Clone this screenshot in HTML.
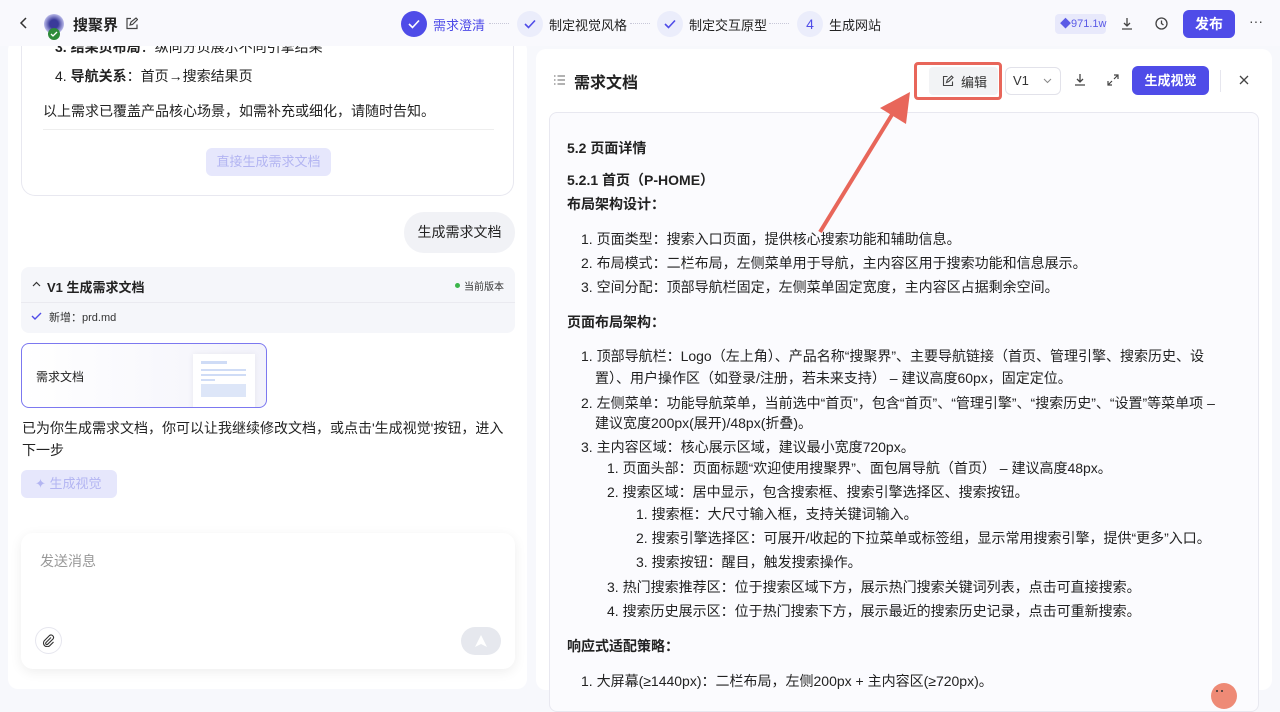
<!DOCTYPE html>
<html><head><meta charset="utf-8">
<style>
*{margin:0;padding:0;box-sizing:border-box}
body{width:1280px;height:697px;overflow:hidden;background:#f7f8fc;font-family:"Liberation Sans","Noto Sans CJK SC",sans-serif;color:#222;position:relative}
.a{position:absolute;white-space:nowrap}
.hdr{position:absolute;left:0;top:0;width:1280px;height:46px;background:#f9f9fd;z-index:5}
.step{position:absolute;top:11px;width:26px;height:26px;border-radius:50%;background:#ebedfb;color:#4f4ce8;font-size:14px;text-align:center;line-height:26px}
.step svg{position:absolute;left:7px;top:8px}
.dots{position:absolute;top:23px;width:20px;border-top:1px dotted #c8c8d8}
.doc{font-size:14px;color:#222}
.doc .a{line-height:20px}
b{font-weight:bold}
</style></head><body>

<div class="hdr">
  <svg class="a" style="left:18px;top:16px" width="12" height="14"><path d="M8 2L3 7l5 5" stroke="#333" stroke-width="1.5" fill="none"/></svg>
  <div class="a" style="left:44px;top:14px;width:20px;height:20px;border-radius:50%;background:radial-gradient(circle,#3a3a9a 30%,#b8b8e8 70%,#eee 100%)"></div>
  <div class="a" style="left:48px;top:28px;width:12px;height:12px;border-radius:50%;background:#2e8b3a"></div>
  <svg class="a" style="left:50px;top:31px" width="8" height="6"><path d="M1 3l2 2 4-4" stroke="#fff" stroke-width="1.3" fill="none"/></svg>
  <div class="a" style="left:73px;top:14px;font-size:15px;font-weight:bold;color:#222">搜聚界</div>
  <svg class="a" style="left:125px;top:17px" width="13" height="13"><path d="M6 1.5H2v10h10V7.5M5 8l1-3 5-4 1.5 1.5-5 5z" stroke="#444" stroke-width="1.2" fill="none"/></svg>

  <div class="step" style="left:401px;background:#4f4ce8"><svg width="12" height="10"><path d="M1 5l3.5 3.5L11 1.5" stroke="#fff" stroke-width="1.6" fill="none"/></svg></div>
  <div class="a" style="left:433px;top:15px;font-size:13px;color:#4f4ce8">需求澄清</div>
  <div class="dots" style="left:489px"></div>
  <div class="step" style="left:517px"><svg width="12" height="10"><path d="M1 5l3.5 3.5L11 1.5" stroke="#4f4ce8" stroke-width="1.6" fill="none"/></svg></div>
  <div class="a" style="left:549px;top:15px;font-size:13px">制定视觉风格</div>
  <div class="dots" style="left:630px"></div>
  <div class="step" style="left:657px"><svg width="12" height="10"><path d="M1 5l3.5 3.5L11 1.5" stroke="#4f4ce8" stroke-width="1.6" fill="none"/></svg></div>
  <div class="a" style="left:689px;top:15px;font-size:13px">制定交互原型</div>
  <div class="dots" style="left:769px"></div>
  <div class="step" style="left:797px">4</div>
  <div class="a" style="left:829px;top:15px;font-size:13px">生成网站</div>

  <div class="a" style="left:1055px;top:14px;width:51px;height:20px;border-radius:4px;background:#e8e9fb;color:#5a5ae6;font-size:11px;line-height:20px;padding-left:5px">◆971.1w</div>
  <svg class="a" style="left:1120px;top:17px" width="14" height="14"><path d="M7 1v8M4 6l3 3 3-3M2 12h10" stroke="#444" stroke-width="1.3" fill="none"/></svg>
  <svg class="a" style="left:1154px;top:16px" width="15" height="15"><circle cx="7.5" cy="7.5" r="5.5" stroke="#444" stroke-width="1.3" fill="none"/><path d="M7.5 4.5v3l2 1.5" stroke="#444" stroke-width="1.3" fill="none"/></svg>
  <div class="a" style="left:1183px;top:10px;width:52px;height:28px;border-radius:6px;background:#4f4ce8;color:#fff;font-size:14px;font-weight:bold;text-align:center;line-height:28px">发布</div>
  <div class="a" style="left:1249px;top:13px;font-size:14px;color:#444">···</div>
</div>

<!-- left panel -->
<div class="a" style="left:8px;top:40px;width:519px;height:649px;background:#fff;border-radius:10px"></div>
<div class="a" style="left:21px;top:36px;width:493px;height:160px;border:1px solid #e8e8f0;border-top:none;border-radius:0 0 14px 14px;background:#fff"></div>
<div class="a" style="left:55px;top:37px;font-size:14px"><b>3. 结果页布局</b>：纵向分页展示不同引擎结果</div>
<div class="a" style="left:55px;top:66px;font-size:14px">4. <b>导航关系</b>：首页→搜索结果页</div>
<div class="a" style="left:43px;top:101px;font-size:14px">以上需求已覆盖产品核心场景，如需补充或细化，请随时告知。</div>
<div class="a" style="left:43px;top:129px;width:451px;border-top:1px solid #eee"></div>
<div class="a" style="left:206px;top:148px;width:125px;height:28px;border-radius:6px;background:#e6e7fc;color:#b3b5f2;font-size:13px;text-align:center;line-height:28px">直接生成需求文档</div>

<div class="a" style="left:404px;top:212px;width:111px;height:41px;border-radius:20px;background:#f1f2f6;font-size:14px;text-align:center;line-height:41px">生成需求文档</div>

<div class="a" style="left:21px;top:267px;width:494px;height:66px;border-radius:8px;background:#f5f6fa"></div>
<div class="a" style="left:21px;top:302px;width:494px;border-top:1px solid #eaeaf0"></div>
<svg class="a" style="left:32px;top:281px" width="9" height="6"><path d="M1 5l3.5-3.5L8 5" stroke="#333" stroke-width="1.2" fill="none"/></svg>
<div class="a" style="left:47px;top:277px;font-size:13px;font-weight:bold">V1 生成需求文档</div>
<div class="a" style="left:455px;top:283px;width:5px;height:5px;border-radius:50%;background:#3bb54a"></div>
<div class="a" style="left:464px;top:278px;font-size:10px;color:#333">当前版本</div>
<svg class="a" style="left:31px;top:312px" width="11" height="8"><path d="M1 4l3 3 6-6" stroke="#4f4ce8" stroke-width="1.4" fill="none"/></svg>
<div class="a" style="left:49px;top:309px;font-size:11px;color:#333">新增：prd.md</div>

<div class="a" style="left:21px;top:343px;width:246px;height:65px;border:1px solid #7c78f0;border-radius:8px;background:linear-gradient(90deg,#fff,#f3f3fb);overflow:hidden">
  <div class="a" style="left:14px;top:24px;font-size:12px">需求文档</div>
  <div class="a" style="left:171px;top:10px;width:62px;height:60px;background:#fff;box-shadow:0 0 6px rgba(0,0,0,.06)">
    <div class="a" style="left:8px;top:7px;width:26px;height:3px;background:#cfdcf6"></div>
    <div class="a" style="left:8px;top:15px;width:45px;height:2px;background:#cfdcf6"></div>
    <div class="a" style="left:8px;top:20px;width:45px;height:2px;background:#cfdcf6"></div>
    <div class="a" style="left:8px;top:25px;width:14px;height:2px;background:#cfdcf6"></div>
    <div class="a" style="left:8px;top:30px;width:45px;height:13px;background:#dde6f8"></div>
  </div>
</div>
<div class="a" style="left:22px;top:417px;font-size:14px;line-height:22px;white-space:normal;width:490px">已为你生成需求文档，你可以让我继续修改文档，或点击'生成视觉'按钮，进入下一步</div>
<div class="a" style="left:21px;top:470px;width:96px;height:28px;border-radius:6px;background:#e6e7fc;color:#b3b5f2;font-size:13px;line-height:28px;padding-left:14px">✦ 生成视觉</div>

<div class="a" style="left:21px;top:533px;width:494px;height:136px;border-radius:12px;background:#fff;box-shadow:0 3px 12px rgba(0,0,0,.07)"></div>
<div class="a" style="left:40px;top:551px;font-size:14px;color:#999">发送消息</div>
<div class="a" style="left:35px;top:627px;width:27px;height:27px;border-radius:50%;border:1px solid #e6e6ee"></div>
<svg class="a" style="left:42px;top:634px" width="13" height="13"><path d="M9 3.5L4 8.5a1.2 1.2 0 0 0 1.7 1.7L11 5a2.5 2.5 0 0 0-3.5-3.5L2.3 6.7a3.7 3.7 0 0 0 5.2 5.2L11.5 8" stroke="#333" stroke-width="1.1" fill="none"/></svg>
<div class="a" style="left:461px;top:627px;width:40px;height:28px;border-radius:14px;background:#e6e8ee"></div>
<svg class="a" style="left:474px;top:634px" width="14" height="14"><path d="M7 1L13 13 7 10 1 13z" fill="#fff"/></svg>

<!-- right panel -->
<div class="a" style="left:536px;top:49px;width:736px;height:641px;background:#fff;border-radius:10px"></div>
<svg class="a" style="left:554px;top:75px" width="11" height="10"><path d="M0 1h1.5M0 5h1.5M0 9h1.5M3.5 1H11M3.5 5H11M3.5 9H11" stroke="#666" stroke-width="1"/></svg>
<div class="a" style="left:574px;top:69px;font-size:16px;font-weight:bold;color:#222">需求文档</div>
<div class="a" style="left:914px;top:62px;width:88px;height:38px;border:3px solid #e8665a;border-radius:4px"></div>
<div class="a" style="left:929px;top:67px;width:69px;height:28px;background:#f2f3f5;border-radius:4px"></div>
<svg class="a" style="left:942px;top:75px" width="12" height="12"><path d="M5.5 1.5H1.5v9h9V6.5M4.5 7.5l.8-2.5 4.2-4 1.5 1.5-4.2 4z" stroke="#444" stroke-width="1.1" fill="none"/></svg>
<div class="a" style="left:961px;top:72px;font-size:13px;color:#333">编辑</div>
<div class="a" style="left:1005px;top:67px;width:56px;height:28px;border:1px solid #e2e2ea;border-radius:6px;font-size:13px;line-height:26px;padding-left:7px;color:#333">V1</div>
<svg class="a" style="left:1043px;top:78px" width="9" height="6"><path d="M1 1l3.5 3.5L8 1" stroke="#888" stroke-width="1" fill="none"/></svg>
<svg class="a" style="left:1073px;top:73px" width="14" height="14"><path d="M7 1v8M4 6l3 3 3-3M2 12h10" stroke="#444" stroke-width="1.3" fill="none"/></svg>
<svg class="a" style="left:1107px;top:74px" width="12" height="12"><path d="M7 1h4v4M11 1L7 5M5 11H1V7M1 11l4-4" stroke="#444" stroke-width="1.2" fill="none"/></svg>
<div class="a" style="left:1132px;top:66px;width:77px;height:29px;border-radius:6px;background:#4f4ce8;color:#fff;font-size:13px;font-weight:bold;text-align:center;line-height:29px">生成视觉</div>
<div class="a" style="left:1220px;top:70px;height:22px;border-left:1px solid #e6e6ee"></div>
<svg class="a" style="left:1238px;top:74px" width="12" height="12"><path d="M2 2l8 8M10 2l-8 8" stroke="#444" stroke-width="1.3"/></svg>

<div class="a" style="left:549px;top:112px;width:710px;height:600px;background:#fbfbfe;border:1px solid #e8e8f0;border-radius:8px"></div>

<div class="doc">
<div class="a" style="left:567px;top:138px"><b>5.2 页面详情</b></div>
<div class="a" style="left:567px;top:170px"><b>5.2.1 首页（P-HOME）</b></div>
<div class="a" style="left:567px;top:194px"><b>布局架构设计：</b></div>
<div class="a" style="left:581px;top:229px">1. 页面类型：搜索入口页面，提供核心搜索功能和辅助信息。</div>
<div class="a" style="left:581px;top:253px">2. 布局模式：二栏布局，左侧菜单用于导航，主内容区用于搜索功能和信息展示。</div>
<div class="a" style="left:581px;top:277px">3. 空间分配：顶部导航栏固定，左侧菜单固定宽度，主内容区占据剩余空间。</div>
<div class="a" style="left:567px;top:312px"><b>页面布局架构：</b></div>
<div class="a" style="left:581px;top:346px">1. 顶部导航栏：Logo（左上角）、产品名称“搜聚界”、主要导航链接（首页、管理引擎、搜索历史、设</div>
<div class="a" style="left:595px;top:368px">置）、用户操作区（如登录/注册，若未来支持） – 建议高度60px，固定定位。</div>
<div class="a" style="left:581px;top:393px">2. 左侧菜单：功能导航菜单，当前选中“首页”，包含“首页”、“管理引擎”、“搜索历史”、“设置”等菜单项 –</div>
<div class="a" style="left:595px;top:413px">建议宽度200px(展开)/48px(折叠)。</div>
<div class="a" style="left:581px;top:437px">3. 主内容区域：核心展示区域，建议最小宽度720px。</div>
<div class="a" style="left:607px;top:458px">1. 页面头部：页面标题“欢迎使用搜聚界”、面包屑导航（首页） – 建议高度48px。</div>
<div class="a" style="left:607px;top:482px">2. 搜索区域：居中显示，包含搜索框、搜索引擎选择区、搜索按钮。</div>
<div class="a" style="left:636px;top:504px">1. 搜索框：大尺寸输入框，支持关键词输入。</div>
<div class="a" style="left:636px;top:528px">2. 搜索引擎选择区：可展开/收起的下拉菜单或标签组，显示常用搜索引擎，提供“更多”入口。</div>
<div class="a" style="left:636px;top:552px">3. 搜索按钮：醒目，触发搜索操作。</div>
<div class="a" style="left:607px;top:577px">3. 热门搜索推荐区：位于搜索区域下方，展示热门搜索关键词列表，点击可直接搜索。</div>
<div class="a" style="left:607px;top:601px">4. 搜索历史展示区：位于热门搜索下方，展示最近的搜索历史记录，点击可重新搜索。</div>
<div class="a" style="left:567px;top:636px"><b>响应式适配策略：</b></div>
<div class="a" style="left:581px;top:671px">1. 大屏幕(≥1440px)：二栏布局，左侧200px + 主内容区(≥720px)。</div>
</div>

<svg class="a" style="left:0;top:0;z-index:6" width="1280" height="697"><path d="M820 232L893 113" stroke="#e8665a" stroke-width="4"/><path d="M910 92L880 108 906 124z" fill="#e8665a"/></svg>

<div class="a" style="left:1211px;top:683px;width:26px;height:26px;border-radius:50%;background:#ee8a76"></div>
<div class="a" style="left:1216px;top:690px;width:2px;height:2px;border-radius:50%;background:#333"></div>
<div class="a" style="left:1221px;top:690px;width:2px;height:2px;border-radius:50%;background:#333"></div>
</body></html>
